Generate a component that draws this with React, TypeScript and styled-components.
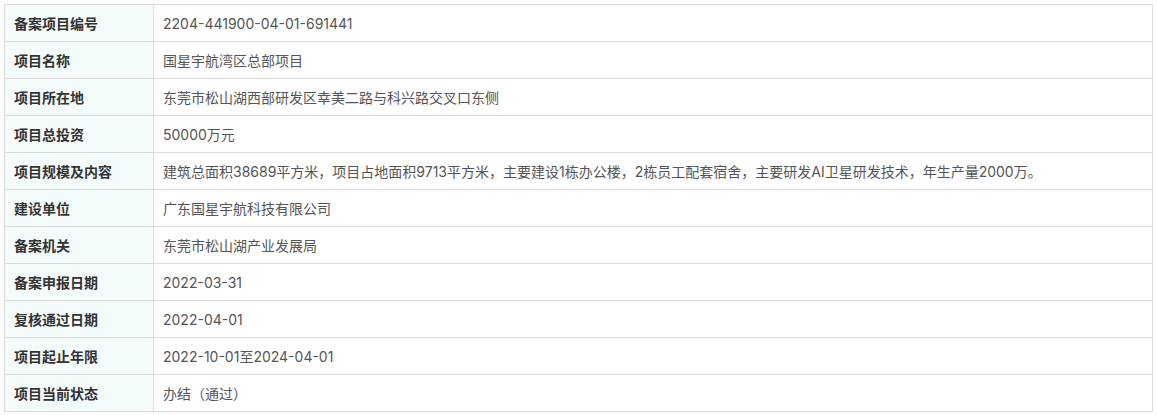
import React from "react";
import styled, { createGlobalStyle } from "styled-components";

const Global = createGlobalStyle`
  html, body { margin: 0; padding: 0; background: #ffffff; }
  body { font-family: "Microsoft YaHei", "Noto Sans CJK SC", "Noto Sans", sans-serif; }
`;

const Page = styled.div`
  padding: 4px 4px 4px 4px;
`;

const Table = styled.table`
  width: 1149px;
  border-collapse: collapse;
  table-layout: fixed;
  border: 1px solid #dcdcdc;
`;

const Row = styled.tr`
  height: 37px;
`;

const Label = styled.th`
  width: 149px;
  box-sizing: border-box;
  background: #f3fbfb;
  border: 1px solid #dcdcdc;
  padding: 0 0 0 9px;
  text-align: left;
  font-size: 14px;
  font-weight: 700;
  color: #333333;
  white-space: nowrap;
`;

const Value = styled.td`
  border: 1px solid #dcdcdc;
  padding: 0 0 0 9px;
  font-family: "Inter", "Noto Sans CJK SC", sans-serif;
  font-size: 14px;
  color: #555555;
  white-space: nowrap;
`;

const rows: [string, string][] = [
  ["备案项目编号", "2204-441900-04-01-691441"],
  ["项目名称", "国星宇航湾区总部项目"],
  ["项目所在地", "东莞市松山湖西部研发区幸美二路与科兴路交叉口东侧"],
  ["项目总投资", "50000万元"],
  [
    "项目规模及内容",
    "建筑总面积38689平方米，项目占地面积9713平方米，主要建设1栋办公楼，2栋员工配套宿舍，主要研发AI卫星研发技术，年生产量2000万。",
  ],
  ["建设单位", "广东国星宇航科技有限公司"],
  ["备案机关", "东莞市松山湖产业发展局"],
  ["备案申报日期", "2022-03-31"],
  ["复核通过日期", "2022-04-01"],
  ["项目起止年限", "2022-10-01至2024-04-01"],
  ["项目当前状态", "办结（通过）"],
];

export default function App() {
  return (
    <Page>
      <Global />
      <Table>
        <colgroup>
          <col style={{ width: 149 }} />
          <col />
        </colgroup>
        <tbody>
          {rows.map(([k, v]) => (
            <Row key={k}>
              <Label>{k}</Label>
              <Value>{v}</Value>
            </Row>
          ))}
        </tbody>
      </Table>
    </Page>
  );
}
